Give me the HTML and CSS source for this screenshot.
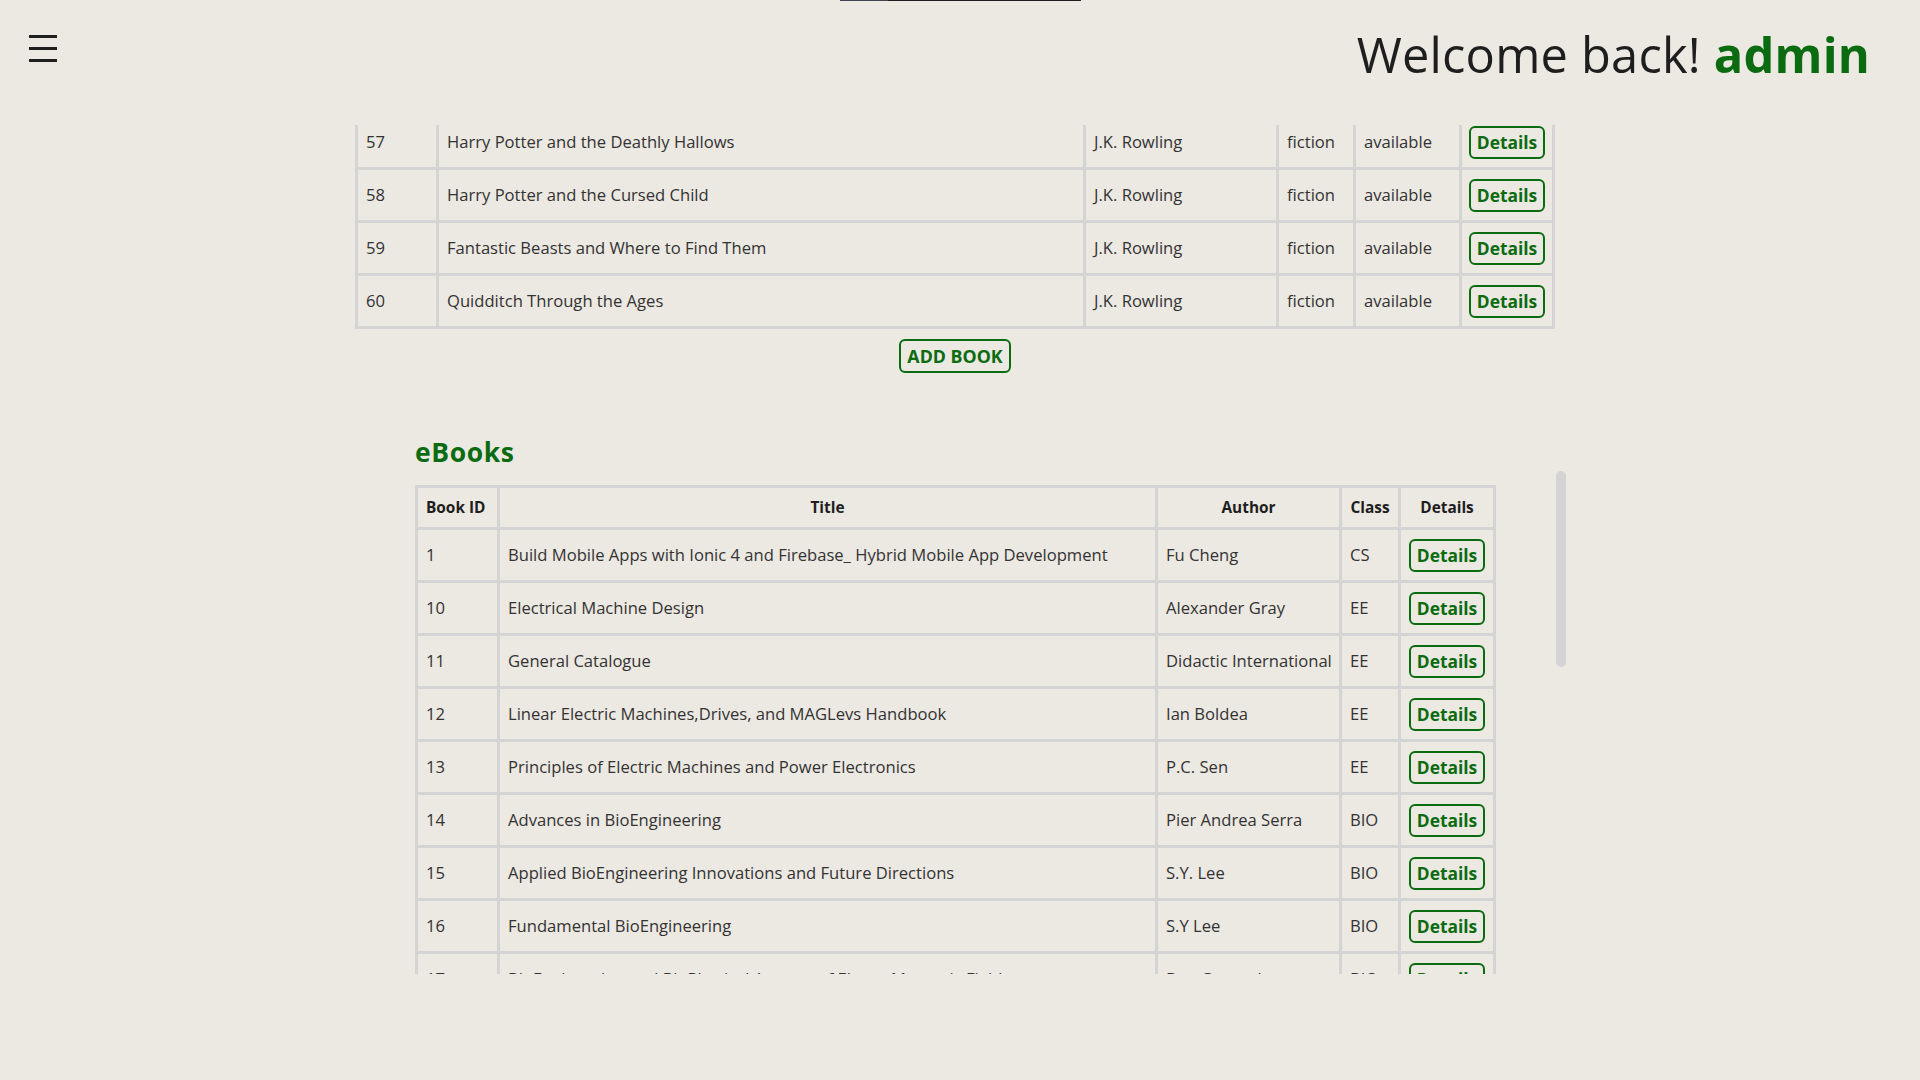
FILE: index.html
```html
<!DOCTYPE html>
<html lang="en">
<head>
<meta charset="utf-8">
<title>Library Admin</title>
<link rel="stylesheet" href="styles.css">
</head>
<body>
<div class="page">
  <header class="topbar">
    <div class="topline"></div>
    <button class="menu" aria-label="Menu"><span></span><span></span><span></span></button>
    <h1 class="welcome">Welcome back! <strong>admin</strong></h1>
  </header>

  <main>
    <section class="books">
      <div class="books-clip">
        <table class="grid books-table">
          <colgroup>
            <col class="c-id"><col class="c-title"><col class="c-author"><col class="c-genre"><col class="c-status"><col class="c-act">
          </colgroup>
          <tbody>
            <tr><td>57</td><td>Harry Potter and the Deathly Hallows</td><td>J.K. Rowling</td><td>fiction</td><td>available</td><td class="act"><button class="btn">Details</button></td></tr>
            <tr><td>58</td><td>Harry Potter and the Cursed Child</td><td>J.K. Rowling</td><td>fiction</td><td>available</td><td class="act"><button class="btn">Details</button></td></tr>
            <tr><td>59</td><td>Fantastic Beasts and Where to Find Them</td><td>J.K. Rowling</td><td>fiction</td><td>available</td><td class="act"><button class="btn">Details</button></td></tr>
            <tr><td>60</td><td>Quidditch Through the Ages</td><td>J.K. Rowling</td><td>fiction</td><td>available</td><td class="act"><button class="btn">Details</button></td></tr>
          </tbody>
        </table>
      </div>
      <div class="add-row"><button class="btn btn-add">ADD BOOK</button></div>
    </section>

    <section class="ebooks">
      <h2 class="section-title">eBooks</h2>
      <div class="scroller">
        <div class="thumb"></div>
        <table class="grid ebooks-table">
          <colgroup>
            <col class="e-id"><col class="e-title"><col class="e-author"><col class="e-class"><col class="e-act">
          </colgroup>
          <thead>
            <tr><th>Book ID</th><th class="center">Title</th><th class="center">Author</th><th class="center">Class</th><th class="center">Details</th></tr>
          </thead>
          <tbody>
            <tr><td>1</td><td>Build Mobile Apps with Ionic 4 and Firebase_ Hybrid Mobile App Development</td><td>Fu Cheng</td><td>CS</td><td class="act"><button class="btn">Details</button></td></tr>
            <tr><td>10</td><td>Electrical Machine Design</td><td>Alexander Gray</td><td>EE</td><td class="act"><button class="btn">Details</button></td></tr>
            <tr><td>11</td><td>General Catalogue</td><td>Didactic International</td><td>EE</td><td class="act"><button class="btn">Details</button></td></tr>
            <tr><td>12</td><td>Linear Electric Machines,Drives, and MAGLevs Handbook</td><td>Ian Boldea</td><td>EE</td><td class="act"><button class="btn">Details</button></td></tr>
            <tr><td>13</td><td>Principles of Electric Machines and Power Electronics</td><td>P.C. Sen</td><td>EE</td><td class="act"><button class="btn">Details</button></td></tr>
            <tr><td>14</td><td>Advances in BioEngineering</td><td>Pier Andrea Serra</td><td>BIO</td><td class="act"><button class="btn">Details</button></td></tr>
            <tr><td>15</td><td>Applied BioEngineering Innovations and Future Directions</td><td>S.Y. Lee</td><td>BIO</td><td class="act"><button class="btn">Details</button></td></tr>
            <tr><td>16</td><td>Fundamental BioEngineering</td><td>S.Y Lee</td><td>BIO</td><td class="act"><button class="btn">Details</button></td></tr>
            <tr><td>17</td><td>BioEngineering and BioPhysical Aspects of ElectroMagnetic Fields</td><td>Ben Greenebaum</td><td>BIO</td><td class="act"><button class="btn">Details</button></td></tr>
          </tbody>
        </table>
      </div>
    </section>
  </main>
</div>
</body>
</html>
```

FILE: styles.css
```css
* { box-sizing: border-box; }

html, body {
  margin: 0;
  padding: 0;
  background: #ece8e2;
}

body {
  font-family: "Open Sans", "Noto Sans", sans-serif;
  color: #333333;
  overflow: hidden;
}

.page {
  width: 1910px;
  height: 1080px;
}

/* ---------- header ---------- */
.topbar {
  position: relative;
  height: 125px;
  display: flex;
  justify-content: space-between;
  align-items: flex-start;
  padding: 0 40px 0 29px;
}

.topline {
  position: absolute;
  top: 0;
  left: 840px;
  width: 241px;
  height: 1px;
  background: linear-gradient(to right, #3e4553 0, #3e4553 48px, #1c1c1c 48px, #1c1c1c 100%);
}

.menu {
  margin-top: 35px;
  padding: 0;
  border: 0;
  background: none;
  display: flex;
  flex-direction: column;
  gap: 9px;
  cursor: pointer;
}

.menu span {
  display: block;
  width: 28px;
  height: 3px;
  background: #1f1f1f;
}

.welcome {
  margin: 0;
  padding-top: 30px;
  font-size: 48.8px;
  line-height: 1;
  font-weight: 400;
  color: #1e1e1e;
  letter-spacing: 0.2px;
}

.welcome strong {
  font-weight: 700;
  color: #0b6b10;
}

/* ---------- tables ---------- */
.grid {
  border-collapse: separate;
  border-spacing: 0;
  table-layout: fixed;
  border-top: 3px solid #d4d4d4;
  border-left: 3px solid #d4d4d4;
  font-size: 16.6px;
}

.grid td,
.grid th {
  border-right: 3px solid #d4d4d4;
  border-bottom: 3px solid #d4d4d4;
  padding: 13px 8px;
  line-height: 24px;
  vertical-align: middle;
  text-align: left;
  white-space: nowrap;
  overflow: hidden;
}

.grid th {
  padding: 7px 8px;
  line-height: 25px;
  font-size: 15.4px;
  font-weight: 700;
  color: #1e1e1e;
}

.grid th.center { text-align: center; }

.grid td.act {
  padding: 0 6px;
  text-align: center;
}

.btn {
  font-family: inherit;
  font-size: 17.4px;
  font-weight: 700;
  color: #0b6b10;
  background: transparent;
  border: 2px solid #0b6b10;
  border-radius: 6px;
  padding: 0 6px;
  height: 33px;
  line-height: 29px;
  cursor: pointer;
}

/* first table (books) */
.books-clip {
  height: 204px;
  overflow: hidden;
}

.books-table {
  width: 1200px;
  margin: -11px auto 0;
}

.c-id { width: 81px; }
.c-title { width: 647px; }
.c-author { width: 193px; }
.c-genre { width: 77px; }
.c-status { width: 106px; }
.c-act { width: 93px; }

.add-row {
  padding-top: 10px;
  text-align: center;
}

.btn-add {
  font-size: 17.8px;
  height: 34px;
  line-height: 30px;
  padding: 0 6px;
}

/* eBooks section */
.ebooks {
  width: 1222px;
  margin: 61px auto 0;
}

.section-title {
  margin: 0 0 0 71px;
  font-size: 26.5px;
  line-height: 36px;
  font-weight: 700;
  letter-spacing: 0.6px;
  color: #0b6b10;
}

.scroller {
  position: relative;
  margin-top: 1px;
  height: 503px;
  padding-top: 14px;
  overflow: hidden;
}

.thumb {
  position: absolute;
  top: 0;
  right: 0;
  width: 10px;
  height: 196px;
  border-radius: 5px;
  background: #d4d4d4;
}

.ebooks-table {
  width: 1081px;
  margin-left: 71px;
}

.e-id { width: 82px; }
.e-title { width: 658px; }
.e-author { width: 184px; }
.e-class { width: 59px; }
.e-act { width: 95px; }
```
